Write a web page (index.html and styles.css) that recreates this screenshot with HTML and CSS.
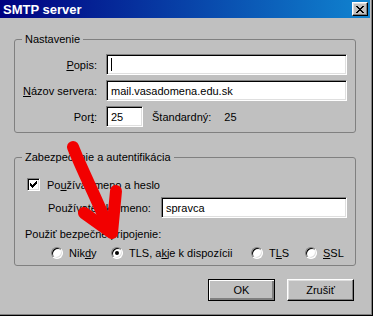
FILE: index.html
```html
<!DOCTYPE html>
<html>
  <head>
    <title>SMTP server</title>
    <link rel="stylesheet" href="styles.css">
  </head>
  <body>
    <div class="window">
      <div class="frame">
        <!-- titulok okna -->
        <div class="titlebar">
          <span class="title">SMTP server</span>
          <div class="close-btn">
            <svg width="8" height="7" viewBox="0 0 8 7">
              <path d="M0 0h2v1h1v1h2v-1h1v-1h2v1h-1v1h-1v1h-1v1h1v1h1v1h1v1h-2v-1h-1v-1h-2v1h-1v1h-2v-1h1v-1h1v-1h1v-1h-1v-1h-1v-1h-1z" fill="#000"/>
            </svg>
          </div>
        </div>

        <div class="content">
          <!-- Nastavenie -->
          <fieldset class="group group-settings">
            <legend>Nastavenie</legend>
            <div class="row">
              <span class="label"><u>P</u>opis:</span>
              <div class="field field-wide"><span class="caret"></span></div>
            </div>
            <div class="row">
              <span class="label"><u>N</u>ázov servera:</span>
              <div class="field field-wide">mail.vasadomena.edu.sk</div>
            </div>
            <div class="row">
              <span class="label">Por<u>t</u>:</span>
              <div class="field field-port">25</div>
              <span class="std">Štandardný:</span>
              <span class="std-value">25</span>
            </div>
          </fieldset>

          <!-- Zabezpečenie -->
          <fieldset class="group group-security">
            <legend>Zabezpečenie a autentifikácia</legend>
            <div class="check-row">
              <div class="checkbox">
                <svg width="7" height="7" viewBox="0 0 7 7">
                  <path d="M0 2h1v1h1v1h1v-1h1v-1h1v-1h1v-1h1v3h-1v1h-1v1h-1v1h-1v1h-1v-1h-1v-1h-1z" fill="#000"/>
                </svg>
              </div>
              <span>Po<u>u</u>žívať meno a heslo</span>
            </div>
            <div class="user-row">
              <span>Používateľské meno:</span>
              <div class="field field-user">spravca</div>
            </div>
            <div class="secure-label">Použiť bezpečné pripojenie:</div>
            <div class="radio-row">
              <div class="option"><span class="radio"></span>Nik<u>d</u>y</div>
              <div class="option"><span class="radio checked"></span>TLS, a<u>k</u> je k dispozícii</div>
              <div class="option"><span class="radio"></span>T<u>L</u>S</div>
              <div class="option"><span class="radio"></span><u>S</u>SL</div>
            </div>
          </fieldset>

          <div class="buttons">
            <div class="btn default">OK</div>
            <div class="btn">Zrušiť</div>
          </div>
        </div>
      </div>

      <!-- červená šípka nakreslená cez dialóg -->
      <svg class="arrow" width="373" height="316" viewBox="0 0 373 316">
        <path d="M73 147 C82 170 95 195 106 222" fill="none" stroke="#f20000" stroke-width="12" stroke-linecap="round"/>
        <path d="M84 213 L112 233 L116 191" fill="none" stroke="#f20000" stroke-width="12" stroke-linecap="round" stroke-linejoin="round"/>
      </svg>
    </div>
  </body>
</html>
```
FILE: styles.css
```css
body {
  margin: 0;
  font-family: "Liberation Sans", Arial, sans-serif;
  font-size: 11px;
  color: #000;
  background: #c0c0c0;
}
* {
  box-sizing: border-box;
}
.window {
  position: relative;
  width: 373px;
  height: 316px;
  background: #c0c0c0;
  border-right: 1px solid #000;
  border-bottom: 1px solid #000;
  overflow: hidden;
}
.frame {
  height: 100%;
  border-right: 1px solid #808080;
  border-bottom: 1px solid #808080;
  padding-right: 1px;
}
.titlebar {
  height: 18px;
  display: flex;
  align-items: center;
  justify-content: space-between;
  padding: 0 2px 0 3px;
  background: linear-gradient(to right, #000080, #1084d0);
}
.title {
  color: #fff;
  font-weight: bold;
  font-size: 13px;
}
.close-btn {
  width: 16px;
  height: 14px;
  display: flex;
  align-items: center;
  justify-content: center;
  background: #c0c0c0;
  border: 1px solid;
  border-color: #fff #000 #000 #fff;
  box-shadow: inset -1px -1px #808080, inset 1px 1px #dfdfdf;
}
.content {
  padding: 15px 0 0 14px;
}
.group {
  width: 342px;
  margin: 0;
  border: 1px solid #808080;
  border-radius: 3px;
  padding: 8px 8px 5px 0;
}
.group legend {
  margin-left: 7px;
  padding: 0 3px;
  line-height: 13px;
}
.group-security {
  margin-top: 18px;
  padding: 4px 8px 6px 0;
}
.row {
  display: flex;
  align-items: center;
  height: 21px;
  margin-bottom: 5px;
}
.row:last-child {
  margin-bottom: 0;
}
.label {
  width: 82px;
  text-align: right;
  margin-right: 9px;
}
.field {
  height: 21px;
  display: flex;
  align-items: center;
  padding-left: 4px;
  background: #fff;
  border: 1px solid;
  border-color: #808080 #fff #fff #808080;
  box-shadow: inset 1px 1px #000, inset -1px -1px #dfdfdf;
}
.field-wide {
  flex: 1;
}
.field-port {
  width: 37px;
}
.caret {
  width: 1px;
  height: 13px;
  background: #000;
}
.std {
  margin-left: 9px;
}
.std-value {
  margin-left: 13px;
}
.check-row {
  display: flex;
  align-items: center;
  height: 13px;
  padding-left: 12px;
  margin-top: 10px;
}
.checkbox {
  width: 13px;
  height: 13px;
  margin-right: 7px;
  display: flex;
  align-items: center;
  justify-content: center;
  background: #fff;
  border: 1px solid;
  border-color: #808080 #fff #fff #808080;
  box-shadow: inset 1px 1px #000, inset -1px -1px #dfdfdf;
}
.user-row {
  display: flex;
  align-items: center;
  height: 21px;
  margin-top: 6px;
  padding-left: 33px;
}
.field-user {
  width: 186px;
  margin-left: auto;
}
.secure-label {
  height: 13px;
  line-height: 13px;
  margin-top: 10px;
  padding-left: 10px;
}
.radio-row {
  display: grid;
  grid-template-columns: 60px 140px 54px auto;
  height: 13px;
  margin-top: 5px;
  padding-left: 36px;
}
.option {
  display: flex;
  align-items: center;
}
.radio {
  position: relative;
  width: 12px;
  height: 12px;
  margin-right: 6px;
  border-radius: 50%;
  background: #fff;
  border: 1px solid;
  border-color: #808080 #fff #fff #808080;
  box-shadow: inset 1px 1px #000, inset -1px -1px #dfdfdf;
}
.radio.checked::after {
  content: "";
  position: absolute;
  left: 3px;
  top: 3px;
  width: 4px;
  height: 4px;
  border-radius: 50%;
  background: #000;
}
.buttons {
  display: flex;
  justify-content: flex-end;
  gap: 12px;
  width: 342px;
  padding-right: 2px;
  margin-top: 13px;
}
.btn {
  width: 67px;
  height: 22px;
  display: flex;
  align-items: center;
  justify-content: center;
  background: #c0c0c0;
  border: 1px solid;
  border-color: #fff #000 #000 #fff;
  box-shadow: inset -1px -1px #808080, inset 1px 1px #dfdfdf;
}
.btn.default {
  border-color: #000;
  box-shadow: inset 1px 1px #fff, inset -2px -2px #808080;
}
.arrow {
  position: absolute;
  left: 0;
  top: 0;
  pointer-events: none;
}
```
